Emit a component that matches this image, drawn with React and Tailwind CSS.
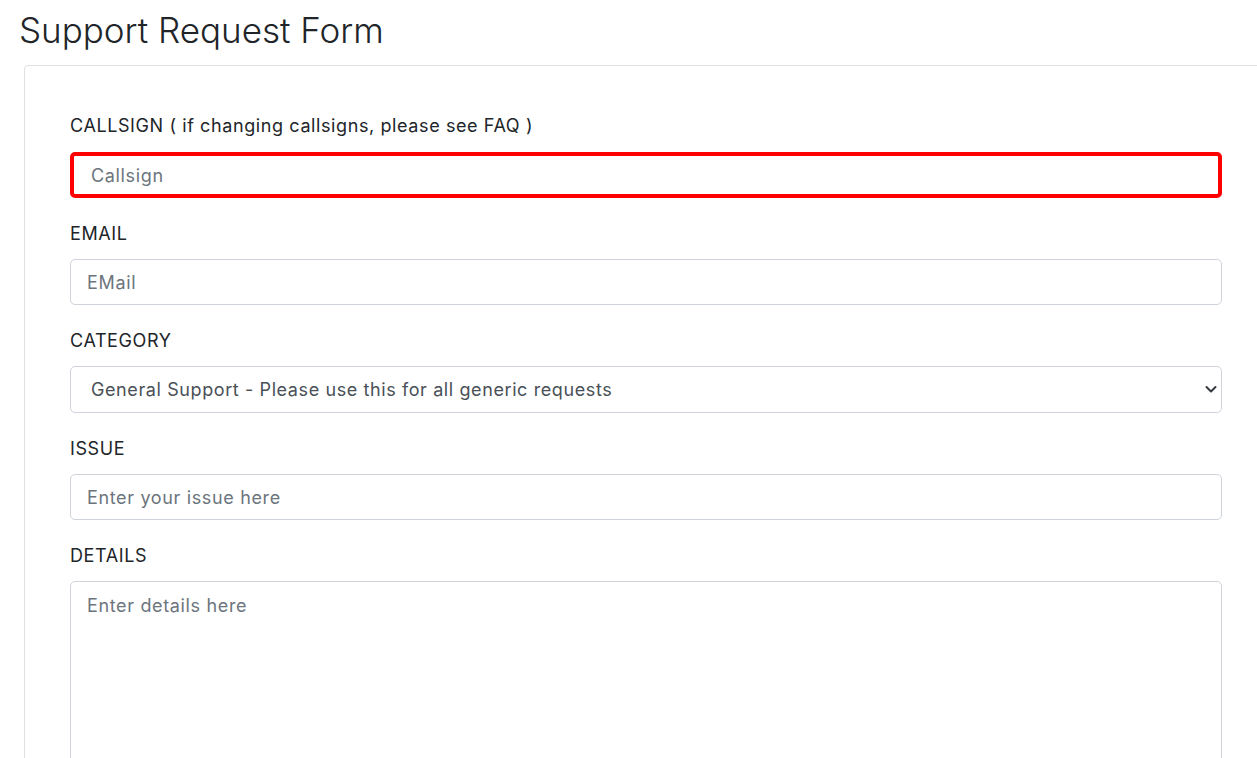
import React from "react";

const font = { fontFamily: '"Inter", "Liberation Sans", sans-serif' };

function Label({ children, mb = "mb-[13px]" }) {
  return (
    <label className={`block text-[18px] leading-[24px] tracking-[0.6px] text-[#212529] ${mb}`}>{children}</label>
  );
}

const inputCls =
  "block w-full h-[46px] border border-[#ced4da] rounded-[5px] px-[16px] text-[18px] tracking-[0.65px] text-[#495057] placeholder:text-[#6c757d] outline-none";

export default function App() {
  return (
    <div className="min-h-[758px] bg-white overflow-hidden" style={font}>
      <h1 className="pl-[19px] pt-[8px] text-[35px] leading-[44px] font-light text-[#212529]">
        Support Request Form
      </h1>
      <div className="ml-[24px] mt-[13px] -mr-[20px] border border-[#e0e0e0] rounded-[4px] pt-[48px] pl-[45px] pr-[54px] pb-[40px]">
        <div className="mb-[24px]">
          <Label mb="mb-[14px]">CALLSIGN ( if changing callsigns, please see FAQ )</Label>
          <input
            placeholder="Callsign"
            className="block w-full h-[46px] border-[4px] border-[#ff0000] rounded-[5px] px-[17px] text-[18px] tracking-[0.65px] text-[#495057] placeholder:text-[#6c757d] outline-none"
          />
        </div>
        <div className="mb-[24px]">
          <Label>EMAIL</Label>
          <input placeholder="EMail" className={inputCls} />
        </div>
        <div className="mb-[24px]">
          <Label>CATEGORY</Label>
          <div className="relative">
            <select className="block w-full h-[47px] appearance-none border border-[#ced4da] rounded-[5px] pl-[20px] pr-[40px] text-[18px] tracking-[0.6px] text-[#495057] bg-white outline-none">
              <option>General Support - Please use this for all generic requests</option>
            </select>
            <svg
              className="absolute right-[5px] top-[19px] pointer-events-none"
              width="12"
              height="9"
              viewBox="0 0 12 9"
            >
              <path d="M1.5 2l4.5 4.5 4.5-4.5" fill="none" stroke="#343a40" strokeWidth="2" strokeLinecap="round" strokeLinejoin="round" />
            </svg>
          </div>
        </div>
        <div className="mb-[24px]">
          <Label>ISSUE</Label>
          <input placeholder="Enter your issue here" className={inputCls} />
        </div>
        <div>
          <Label>DETAILS</Label>
          <textarea
            placeholder="Enter details here"
            className="block w-full h-[220px] border border-[#ced4da] rounded-[5px] px-[16px] py-[10px] text-[18px] tracking-[0.65px] text-[#495057] placeholder:text-[#6c757d] outline-none resize-none"
          />
        </div>
      </div>
    </div>
  );
}
